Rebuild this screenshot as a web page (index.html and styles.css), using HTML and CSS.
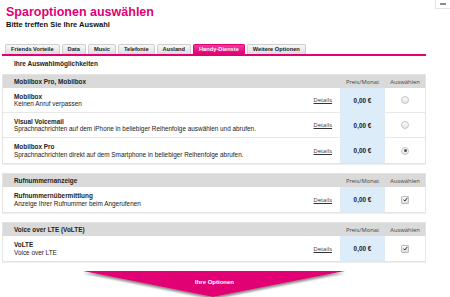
FILE: index.html
```html
<!DOCTYPE html>
<html lang="de">
<head>
  <meta charset="UTF-8">
  <meta name="viewport" content="width=device-width, initial-scale=1.0">
  <title>Sparoptionen auswählen</title>
  <link rel="stylesheet" href="styles.css">
</head>
<body>
  <header class="top">
    <div class="heading">
      <h1>Sparoptionen auswählen</h1>
      <p class="lead">Bitte treffen Sie Ihre Auswahl</p>
    </div>
    <span class="corner-widget"><span class="corner-mark"></span></span>
  </header>

  <div class="content">
    <!-- Tabs -->
    <nav class="tabs">
      <a class="tab">Friends Vorteile</a>
      <a class="tab">Data</a>
      <a class="tab">Music</a>
      <a class="tab">Telefonie</a>
      <a class="tab">Ausland</a>
      <a class="tab active">Handy-Dienste</a>
      <a class="tab">Weitere Optionen</a>
    </nav>

    <h2 class="choices">Ihre Auswahlmöglichkeiten</h2>

    <!-- Mobilbox -->
    <section class="group">
      <div class="row head">
        <div class="cell name">Mobilbox Pro, Mobilbox</div>
        <div class="cell"></div>
        <div class="cell col-title">Preis/Monat</div>
        <div class="cell col-title">Auswählen</div>
      </div>
      <div class="row">
        <div class="cell name">
          <strong>Mobilbox</strong>
          <span>Keinen Anruf verpassen</span>
        </div>
        <div class="cell details"><a href="#">Details</a></div>
        <div class="cell price">0,00 €</div>
        <div class="cell pick"><span class="radio"></span></div>
      </div>
      <div class="row">
        <div class="cell name">
          <strong>Visual Voicemail</strong>
          <span>Sprachnachrichten auf dem iPhone in beliebiger Reihenfolge auswählen und abrufen.</span>
        </div>
        <div class="cell details"><a href="#">Details</a></div>
        <div class="cell price">0,00 €</div>
        <div class="cell pick"><span class="radio"></span></div>
      </div>
      <div class="row">
        <div class="cell name">
          <strong>Mobilbox Pro</strong>
          <span>Sprachnachrichten direkt auf dem Smartphone in beliebiger Reihenfolge abrufen.</span>
        </div>
        <div class="cell details"><a href="#">Details</a></div>
        <div class="cell price">0,00 €</div>
        <div class="cell pick"><span class="radio checked"></span></div>
      </div>
    </section>

    <!-- Rufnummernanzeige -->
    <section class="group">
      <div class="row head">
        <div class="cell name">Rufnummernanzeige</div>
        <div class="cell"></div>
        <div class="cell col-title">Preis/Monat</div>
        <div class="cell col-title">Auswählen</div>
      </div>
      <div class="row">
        <div class="cell name">
          <strong>Rufnummernübermittlung</strong>
          <span>Anzeige Ihrer Rufnummer beim Angerufenen</span>
        </div>
        <div class="cell details"><a href="#">Details</a></div>
        <div class="cell price">0,00 €</div>
        <div class="cell pick">
          <span class="check"><svg viewBox="0 0 8 8" width="5" height="5"><path d="M1 4.2 L3 6.4 L7 1.2" fill="none" stroke="#222" stroke-width="1.5"/></svg></span>
        </div>
      </div>
    </section>

    <!-- VoLTE -->
    <section class="group">
      <div class="row head">
        <div class="cell name">Voice over LTE (VoLTE)</div>
        <div class="cell"></div>
        <div class="cell col-title">Preis/Monat</div>
        <div class="cell col-title">Auswählen</div>
      </div>
      <div class="row">
        <div class="cell name">
          <strong>VoLTE</strong>
          <span>Voice over LTE</span>
        </div>
        <div class="cell details"><a href="#">Details</a></div>
        <div class="cell price">0,00 €</div>
        <div class="cell pick">
          <span class="check"><svg viewBox="0 0 8 8" width="5" height="5"><path d="M1 4.2 L3 6.4 L7 1.2" fill="none" stroke="#222" stroke-width="1.5"/></svg></span>
        </div>
      </div>
    </section>

    <!-- Call to action -->
    <div class="cta">
      <svg class="cta-shape" viewBox="0 0 266 30" width="266" height="30">
        <defs>
          <filter id="shade" x="-5%" y="-20%" width="110%" height="160%">
            <feDropShadow dx="0" dy="2" stdDeviation="1.2" flood-color="#555" flood-opacity="0.7"/>
          </filter>
        </defs>
        <polygon points="0,0 262,0 130,26" fill="#e20074" filter="url(#shade)"/>
      </svg>
      <span class="cta-label">Ihre Optionen</span>
    </div>
  </div>
</body>
</html>
```

FILE: styles.css
```css
/* Base */
body {
  margin: 0;
  font-family: "Liberation Sans", Arial, sans-serif;
  color: #222;
  background: #fff;
}

/* Header */
.top {
  display: flex;
  justify-content: space-between;
  align-items: flex-start;
}

.heading {
  padding-left: 6px;
}

h1 {
  margin: 0;
  padding-top: 5px;
  font-size: 12.5px;
  line-height: 15px;
  color: #e20074;
}

.lead {
  margin: 0;
  font-size: 7.5px;
  line-height: 9px;
  font-weight: bold;
  color: #111;
}

.corner-widget {
  width: 14px;
  height: 8px;
  border-left: 1px solid #e4e4e4;
  border-bottom: 1px solid #e4e4e4;
  display: flex;
  align-items: center;
  justify-content: center;
}

.corner-mark {
  width: 6px;
  height: 2px;
  background: #8a8a9a;
}

/* Content column */
.content {
  margin-left: 2px;
  width: 424px;
}

/* Tabs */
.tabs {
  display: flex;
  gap: 2px;
  margin-top: 15px;
  padding-left: 3px;
  border-bottom: 2px solid #e20074;
}

.tab {
  height: 9px;
  padding: 0 5px;
  border: 1px solid #cfcfcf;
  border-bottom: none;
  border-radius: 2px 2px 0 0;
  background: linear-gradient(#f7f7f7, #dedede);
  font-size: 5.7px;
  line-height: 9px;
  font-weight: bold;
  color: #222;
  white-space: nowrap;
}

.tab.active {
  background: linear-gradient(#ee3d9c, #e20074);
  border-color: #e20074;
  color: #fff;
}

.choices {
  margin: 4px 0 6px;
  padding-left: 12px;
  font-size: 6.5px;
  line-height: 8px;
  color: #222;
}

/* Option groups */
.group {
  border: 1px solid #e4e4e4;
  box-shadow: 0 1px 0 #eee;
  margin-bottom: 9px;
}

.row {
  display: grid;
  grid-template-columns: 1fr 56px 45px 40px;
  height: 25px;
}

.row.head {
  height: 13px;
  background: #dadada;
}

.cell {
  display: flex;
  align-items: center;
  border-bottom: 1px solid #e8e8e8;
  font-size: 6.4px;
}

.row:last-child .cell {
  border-bottom: none;
}

.row.head .cell {
  border-bottom: none;
}

.name {
  flex-direction: column;
  align-items: flex-start;
  justify-content: center;
  padding-left: 11px;
  line-height: 7.5px;
  white-space: nowrap;
}

.row.head .name {
  font-weight: bold;
  line-height: 13px;
}

.col-title {
  justify-content: center;
  font-family: "Open Sans", sans-serif;
  font-size: 5.8px;
  color: #444;
}

.details {
  justify-content: flex-end;
  padding-right: 8px;
}

.details a {
  color: #333;
  font-family: "Open Sans", sans-serif;
  font-size: 5.8px;
}

.price {
  justify-content: center;
  background: #dcedf9;
  border-bottom-color: #dcedf9;
  font-weight: bold;
}

.pick {
  justify-content: center;
}

/* Controls */
.radio {
  width: 6px;
  height: 6px;
  border: 1px solid #c4c4c4;
  border-radius: 50%;
  background: linear-gradient(#fbfbfb, #e6e6e6);
  display: flex;
  align-items: center;
  justify-content: center;
}

.radio.checked::after {
  content: "";
  width: 3px;
  height: 3px;
  border-radius: 50%;
  background: #555;
}

.check {
  width: 6px;
  height: 6px;
  border: 1px solid #bdbdbd;
  border-radius: 1px;
  background: linear-gradient(#fafafa, #dcdcdc);
  display: flex;
  align-items: center;
  justify-content: center;
}

/* Call to action */
.cta {
  display: grid;
  margin: 1px 0 0 81px;
  width: 266px;
}

.cta-shape,
.cta-label {
  grid-area: 1 / 1;
}

.cta-label {
  justify-self: center;
  margin: 7px 0 0 -3px;
  font-size: 6px;
  line-height: 8px;
  font-weight: bold;
  color: #fff;
}
```
